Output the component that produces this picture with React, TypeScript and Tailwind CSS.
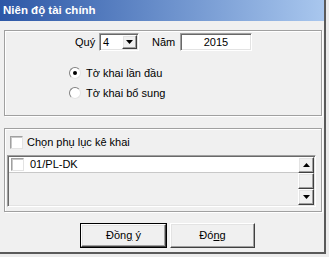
import React from "react";

const raised =
  "border border-t-white border-l-white border-b-[#404040] border-r-[#404040] shadow-[inset_-1px_-1px_0_#a0a0a0,inset_1px_1px_0_#e3e3e3] bg-[#f0f0f0]";
const sunken =
  "border border-t-[#a0a0a0] border-l-[#a0a0a0] border-b-white border-r-white shadow-[inset_1px_1px_0_#696969,inset_-1px_-1px_0_#e3e3e3]";
const groupBox =
  "border border-[#a0a0a0] shadow-[inset_1px_1px_0_#fff,1px_1px_0_#fff]";

function Arrow({ up = false }: { up?: boolean }) {
  return (
    <svg width="7" height="4" viewBox="0 0 7 4">
      <polygon points={up ? "3.5,0 7,4 0,4" : "0,0 7,0 3.5,4"} fill="#000" />
    </svg>
  );
}

function Check() {
  return (
    <div className="w-[13px] h-[13px] shrink-0 bg-white border border-t-[#a0a0a0] border-l-[#a0a0a0] border-b-[#e3e3e3] border-r-[#e3e3e3] shadow-[inset_1px_1px_0_#c8c8c8]" />
  );
}

function Radio({ checked = false }: { checked?: boolean }) {
  return (
    <div className="w-[12px] h-[12px] shrink-0 rounded-full bg-white border border-t-[#808080] border-l-[#808080] border-b-[#e3e3e3] border-r-[#e3e3e3] flex items-center justify-center">
      {checked && <div className="w-[4px] h-[4px] rounded-full bg-black" />}
    </div>
  );
}

export default function App() {
  return (
    <div
      className="w-[329px] h-[257px] bg-[#ececec] text-[11px] text-black"
      style={{ fontFamily: '"Liberation Sans", Arial, sans-serif' }}
    >
      <div className="w-[326px] h-[254px] bg-[#f0f0f0] border-r-2 border-b-2 border-[#5a5a5a] flex flex-col">
        <div className="h-[21px] shrink-0 bg-gradient-to-r from-[#2d57a6] to-[#a9c7ee] text-white font-bold text-[11.5px] pl-[3px] flex items-center">
          Niên độ tài chính
        </div>

        <div className="px-[4px] pt-[9px] flex flex-col">
          {/* group 1 */}
          <div className={`${groupBox} w-[318px] h-[86px] pt-[2px] pl-[70px] flex flex-col`}>
            <div className="flex items-center h-[18px]">
              <span className="w-[16px] whitespace-nowrap">Quý</span>
              <div className={`${sunken} bg-white ml-[8px] w-[40px] h-[18px] flex items-center`}>
                <span className="pl-[3px] flex-1">4</span>
                <div className={`${raised} w-[15px] h-[14px] mr-[1px] flex items-center justify-center`}>
                  <Arrow />
                </div>
              </div>
              <span className="ml-[13px] w-[28px] whitespace-nowrap">Năm</span>
              <div className={`${sunken} bg-white w-[72px] h-[18px] flex items-center justify-center`}>
                2015
              </div>
            </div>
            <div className="mt-[14px] flex flex-col gap-[4px] -ml-[6px]">
              <div className="h-[16px] flex items-center gap-[5px]">
                <Radio checked />
                <span>Tờ khai lần đầu</span>
              </div>
              <div className="h-[16px] flex items-center gap-[5px]">
                <Radio />
                <span>Tờ khai bổ sung</span>
              </div>
            </div>
          </div>

          {/* group 2 */}
          <div className={`${groupBox} mt-[12px] w-[318px] h-[84px] pt-[7px] pl-[5px] flex flex-col`}>
            <div className="flex items-center gap-[4px] h-[13px]">
              <Check />
              <span>Chọn phụ lục kê khai</span>
            </div>
            <div className={`${sunken} mt-[6px] -ml-[3px] w-[309px] h-[52px] p-[1px] flex bg-[#f0f0f0]`}>
              <div className="flex-1 flex flex-col">
                <div className="h-[16px] bg-white border-b border-[#c8c8c8] flex items-center pl-[2px] gap-[4px]">
                  <Check />
                  <span className="ml-[2px]">01/PL-DK</span>
                </div>
              </div>
              <div className="w-[16px] flex flex-col">
                <div className={`${raised} h-[16px] flex items-center justify-center`}>
                  <Arrow up />
                </div>
                <div className={`${raised} flex-1`} />
                <div className={`${raised} h-[16px] flex items-center justify-center`}>
                  <Arrow />
                </div>
              </div>
            </div>
          </div>

          {/* buttons */}
          <div className="mt-[11px] ml-[76px] flex gap-[3px]">
            <div className="border border-black">
              <div className={`${raised} w-[85px] h-[23px] flex items-center justify-center`}>
                <span>
                  Đồn<span className="underline">g</span> ý
                </span>
              </div>
            </div>
            <div className={`${raised} w-[85px] h-[25px] flex items-center justify-center`}>
              <span>
                Đó<span className="underline">n</span>g
              </span>
            </div>
          </div>
        </div>
      </div>
    </div>
  );
}
